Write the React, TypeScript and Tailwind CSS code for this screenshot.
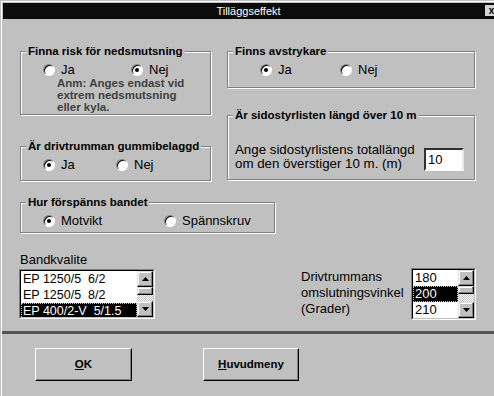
import React from "react";

type RadioProps = { label: string; checked?: boolean; className?: string };

const Radio = ({ label, checked, className }: RadioProps) => {
  return (
    <label className={`flex items-center gap-[6px] h-[15px] ${className ?? ""}`}>
      <span className="flex items-center justify-center w-3 h-3 rounded-full bg-white border border-t-[#808080] border-l-[#808080] border-b-white border-r-white shadow-[inset_1px_1px_0_#000]">
        {checked && <span className="w-1 h-1 rounded-full bg-black" />}
      </span>
      <span className="text-[13px] leading-[15px] text-black">{label}</span>
    </label>
  );
};

type GroupProps = { title: string; className?: string; children: React.ReactNode };

const Group = ({ title, className, children }: GroupProps) => {
  return (
    <fieldset className={`border border-[#808080] shadow-[1px_1px_0_#fff,inset_1px_1px_0_#fff] ${className ?? ""}`}>
      <legend className="ml-[5px] px-[2px] bg-[#c0c0c0] text-[11.5px] font-bold leading-[14px] text-black">{title}</legend>
      {children}
    </fieldset>
  );
};

const Arrow = ({ down }: { down?: boolean }) => (
  <svg width="7" height="4" viewBox="0 0 7 4">
    <polygon points={down ? "0,0 7,0 3.5,4" : "3.5,0 7,4 0,4"} fill="#000" />
  </svg>
);

const raised =
  "bg-[#c0c0c0] border border-t-[#dfdfdf] border-l-[#dfdfdf] border-b-black border-r-black shadow-[inset_-1px_-1px_0_#808080,inset_1px_1px_0_#fff]";

const ScrollBar = () => (
  <div className="flex flex-col w-4">
    <div className={`flex items-center justify-center h-4 ${raised}`}>
      <Arrow />
    </div>
    <div className="flex flex-col flex-1">
      <div className={`h-[8px] ${raised}`} />
      <div className="flex-1 bg-[repeating-conic-gradient(#fff_0%_25%,#c0c0c0_0%_50%)] bg-[length:2px_2px]" />
    </div>
    <div className={`flex items-center justify-center h-4 ${raised}`}>
      <Arrow down />
    </div>
  </div>
);

type ListProps = { items: string[]; selected: number; className: string; textSize: string };

const ListBox = ({ items, selected, className, textSize }: ListProps) => {
  return (
    <div className={`border border-t-[#808080] border-l-[#808080] border-b-white border-r-white ${className}`}>
      <div className="flex h-full border border-t-black border-l-black border-b-[#c0c0c0] border-r-[#c0c0c0] bg-white">
        <div className="flex-1 overflow-hidden">
          {items.map((it, i) => (
            <div
              key={it}
              className={`h-4 leading-4 pl-[2px] whitespace-pre ${textSize} ${
                i === selected ? "bg-black text-white outline outline-1 outline-dotted outline-[#c0c0c0] -outline-offset-1" : "text-black"
              }`}
            >
              {it}
            </div>
          ))}
        </div>
        <ScrollBar />
      </div>
    </div>
  );
};

const Button = ({ first, rest, className }: { first: string; rest: string; className: string }) => (
  <button className={`flex items-center justify-center h-[33px] text-[11.5px] font-bold text-black border border-t-white border-l-white border-b-black border-r-black shadow-[inset_-1px_-1px_0_#808080] ${className}`}>
    <span className="underline">{first}</span>
    {rest}
  </button>
);

export default function App() {
  return (
    <div className="w-[494px] h-[396px] overflow-hidden bg-[#c0c0c0] pl-[1px] pt-[1px] font-['Liberation_Sans',Arial,sans-serif]">
      <div className="h-full border-l border-t border-white">
        {/* title bar */}
        <div className="relative flex items-center justify-center ml-[1px] mt-[1px] h-4 bg-[#0c0c0c]">
          <span className="text-[11px] leading-4 text-white">Tilläggseffekt</span>
          <span className="absolute right-[-4px] top-[2px] flex items-center justify-center w-[13px] h-[11px] bg-[#d4d4d4] text-[10px] font-bold leading-none text-black">
            x
          </span>
        </div>

        <div className="flex mt-[25px] ml-[18px] gap-4">
          <div className="flex flex-col w-[191px]">
            <Group title="Finna risk för nedsmutsning">
              <div className="pl-[22px] pt-[4px] pb-[1px]">
                <div className="flex">
                  <Radio label="Ja" className="w-[88px]" />
                  <Radio label="Nej" checked />
                </div>
                <p className="ml-[14px] mt-0 text-[11.5px] font-bold leading-[12px] text-[#404040]">
                  Anm: Anges endast vid
                  <br />
                  extrem nedsmutsning
                  <br />
                  eller kyla.
                </p>
              </div>
            </Group>
            <Group title="Är drivtrumman gummibelaggd" className="mt-[24px]">
              <div className="flex pl-[22px] pt-[4px] pb-[8px]">
                <Radio label="Ja" checked className="w-[73px]" />
                <Radio label="Nej" />
              </div>
            </Group>
          </div>

          <div className="flex flex-col w-[248px]">
            <Group title="Finns avstrykare">
              <div className="flex pl-[32px] pt-[4px] pb-[10px]">
                <Radio label="Ja" checked className="w-[80px]" />
                <Radio label="Nej" />
              </div>
            </Group>
            <Group title="Är sidostyrlisten längd över 10 m" className="mt-[20px]">
              <div className="flex items-end pl-[7px] pt-[21px] pb-[8px]">
                <p className="w-[182px] text-[13.3px] leading-[14px] text-black whitespace-nowrap">
                  Ange sidostyrlistens totallängd
                  <br />
                  om den överstiger 10 m. (m)
                </p>
                <input
                  readOnly
                  value="10"
                  className="ml-[7px] w-[40px] h-[23px] pl-[2px] bg-white text-[13px] text-black border-2 border-t-[#303030] border-l-[#303030] border-b-white border-r-[#e8e8e8] outline-none"
                />
              </div>
            </Group>
          </div>
        </div>

        <Group title="Hur förspänns bandet" className="mt-[14px] ml-[18px] w-[255px]">
          <div className="flex pl-[22px] pt-[4px] pb-[4px]">
            <Radio label="Motvikt" checked className="w-[121px]" />
            <Radio label="Spännskruv" />
          </div>
        </Group>

        <div className="flex items-start mt-[19px] ml-[17px]">
          <div className="flex flex-col">
            <span className="pl-[1px] text-[13px] leading-4 text-black">Bandkvalite</span>
            <ListBox
              items={["EP 1250/5  6/2", "EP 1250/5  8/2", "EP 400/2-V  5/1.5"]}
              selected={2}
              textSize="text-[12.5px]"
              className="mt-[1px] w-[136px] h-[50px]"
            />
          </div>
          <div className="flex mt-[16px] ml-[146px]">
            <p className="w-[110px] pt-[1px] text-[13px] leading-4 text-black whitespace-nowrap">
              Drivtrummans
              <br />
              omslutningsvinkel
              <br />
              (Grader)
            </p>
            <ListBox items={["180", "200", "210"]} selected={1} textSize="text-[13px]" className="w-[65px] h-[52px]" />
          </div>
        </div>

        <div className="mt-[11px] h-[3px] bg-[#545454]" />

        <div className="flex mt-[14px] ml-[33px]">
          <Button first="O" rest="K" className="w-[97px]" />
          <Button first="H" rest="uvudmeny" className="ml-[71px] w-[96px]" />
        </div>
      </div>
    </div>
  );
}
